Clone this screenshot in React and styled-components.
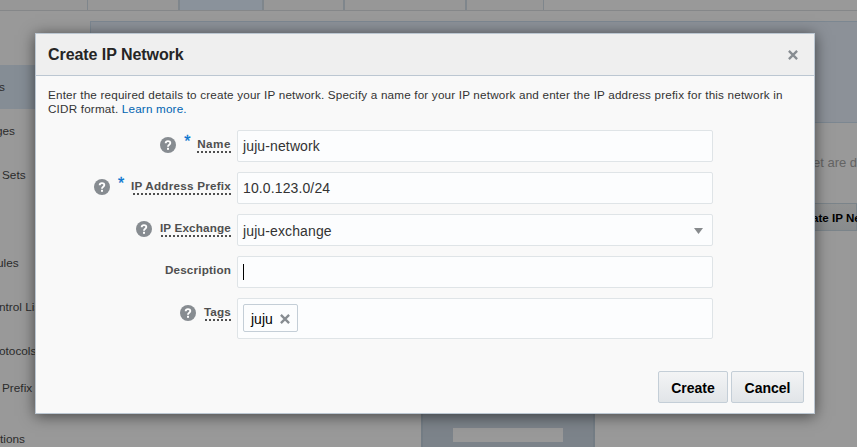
import React from "react";
import styled, { createGlobalStyle } from "styled-components";

const Global = createGlobalStyle`
  * { box-sizing: border-box; }
  html, body { margin: 0; padding: 0; overflow: hidden; background: #999; }
  body { font-family: "Liberation Sans", Arial, sans-serif; color: #333; }
`;

const Page = styled.div`
  position: relative;
  width: 857px;
  height: 447px;
  overflow: hidden;
  background: #999;
`;

const TabBar = styled.nav`
  display: flex;
  height: 11px;
  border-bottom: 1px solid #858789;
`;

const Tab = styled.div`
  width: ${(p) => p.$width}px;
  background: ${(p) => (p.$active ? "#8a929b" : "#979797")};
  border-right: ${(p) => p.$edge}px solid #7f868c;
`;

const Body = styled.div`
  display: flex;
  height: 436px;
`;

const Sidebar = styled.ul`
  flex: none;
  width: 90px;
  margin: 0;
  padding: 54px 0 0;
  list-style: none;
`;

const SideItem = styled.li`
  display: flex;
  align-items: center;
  height: ${(p) => p.$height || 44}px;
  margin-top: ${(p) => p.$gap || 0}px;
  line-height: 14px;
  text-indent: ${(p) => p.$indent}px;
  background: ${(p) => (p.$active ? "#858d95" : "transparent")};
  font-size: 11.8px;
  white-space: nowrap;
  color: #2b2b2b;
`;

const Content = styled.main`
  flex: 1;
  min-width: 0;
  display: flex;
  flex-direction: column;
  padding-top: 10px;
`;

const Banner = styled.div`
  height: 102px;
  border: 1px solid #7c8791;
  border-right: 0;
  background: #8c9198;
`;

const Note = styled.p`
  margin: 32px 0 0 723px;
  font-size: 13px;
  line-height: 16px;
  white-space: nowrap;
  color: #646464;
`;

const PageButton = styled.div`
  height: 28px;
  margin: 32px 0 0 710px;
  padding-left: 11px;
  border: 1px solid #7b848a;
  background: linear-gradient(#929393, #888b8d);
  font-size: 11.6px;
  font-weight: bold;
  line-height: 28px;
  white-space: nowrap;
  color: #000;
`;

const Diagram = styled.div`
  width: 174px;
  flex: 1;
  margin: 150px 0 0 331px;
  padding: 47px 30px 0;
  border: 2px solid #747d85;
  border-width: 0 2px;
  background: #7c838a;
`;

const DiagramLabel = styled.div`
  height: 14px;
  background: #999;
`;

const Dialog = styled.section`
  position: absolute;
  left: 35px;
  top: 33px;
  width: 780px;
  height: 381px;
  display: flex;
  flex-direction: column;
  border: 1px solid #bcc7d2;
  background: #f9f9f9;
  box-shadow: 0 2px 14px rgba(0, 0, 0, 0.55);
`;

const Header = styled.header`
  display: flex;
  align-items: center;
  justify-content: space-between;
  height: 42px;
  padding: 0 16px 0 12px;
  border-bottom: 1px solid #bcc7d2;
  background: #efefef;
`;

const Title = styled.h1`
  margin: 0;
  font-size: 16px;
  line-height: 20px;
  letter-spacing: -0.06px;
  color: #252525;
`;

const Intro = styled.p`
  margin: 12px 0 0 12px;
  font-size: 11.7px;
  line-height: 14px;
  letter-spacing: 0.18px;
  white-space: nowrap;
`;

const Link = styled.a`
  color: #0064b1;
`;

const Form = styled.form`
  display: flex;
  flex-direction: column;
  gap: 10px;
  margin-top: 14px;
`;

const Row = styled.div`
  display: flex;
`;

const LabelCell = styled.div`
  display: flex;
  justify-content: flex-end;
  width: 201px;
  padding: 6px 6px 0 0;
`;

const HelpIcon = styled.svg`
  width: 16px;
  height: 16px;
  margin-top: 1px;
`;

const Star = styled.span`
  margin-left: 8px;
  width: 6px;
  font-size: 16px;
  line-height: 12px;
  color: #0572ce;
  -webkit-text-stroke: 0.3px #0572ce;
`;

const Label = styled.label`
  height: 17px;
  margin-left: ${(p) => p.$gap}px;
  font-size: 11.7px;
  font-weight: bold;
  line-height: 16px;
  letter-spacing: ${(p) => p.$tracking || 0.16}px;
  white-space: nowrap;
  color: #4f4f4f;
  background: ${(p) =>
    p.$dotted
      ? "repeating-linear-gradient(270deg, #4f4f4f 0 2px, transparent 2px 4px) 0 100% / 100% 2px no-repeat"
      : "none"};
`;

const Field = styled.div`
  display: flex;
  align-items: center;
  justify-content: space-between;
  width: 476px;
  height: ${(p) => p.$height || 32}px;
  padding: ${(p) => p.$drop || 0}px 9px 0 5px;
  border: 1px solid #dfe4e7;
  border-radius: 2px;
  background: #fcfdfe;
  font-size: 14px;
  line-height: 16px;
  letter-spacing: 0.12px;
  color: #333;
`;

const Caret = styled.span`
  width: 1px;
  height: 16px;
  background: #000;
`;

const Tag = styled.span`
  display: flex;
  align-items: center;
  gap: 7px;
  width: 55px;
  height: 28px;
  margin-bottom: 1px;
  padding: 2px 0 0 7px;
  border: 1px solid #c4ced7;
  border-radius: 2px;
  letter-spacing: 0;
  color: #000;
`;

const Footer = styled.footer`
  display: flex;
  justify-content: flex-end;
  gap: 3px;
  margin-top: auto;
  padding: 0 10px 10px 0;
`;

const Button = styled.button`
  width: ${(p) => p.$width}px;
  height: 32px;
  padding: 2px 0 0;
  border: 1px solid #c4ced7;
  border-radius: 2px;
  background: linear-gradient(#f3f4f5, #e1e5e8);
  font: bold 14px "Liberation Sans", Arial, sans-serif;
  color: #000;
`;

function Help() {
  return (
    <HelpIcon viewBox="0 0 16 16">
      <circle cx="8" cy="8" r="8" fill="#878c91" />
      <path d="M5.7 6.2C5.7 3.4 10.3 3.4 10.3 6.1C10.3 7.8 8 7.7 8 9.7" fill="none" stroke="#fff" strokeWidth="1.9" />
      <rect x="7" y="10.8" width="2" height="2" fill="#fff" />
    </HelpIcon>
  );
}

function Cross({ size }) {
  return (
    <svg width={size} height={size} viewBox="0 0 10 10">
      <path d="M.9 .9L9.1 9.1M9.1 .9L.9 9.1" stroke="#878c91" strokeWidth="2.3" />
    </svg>
  );
}

function FormRow({ label, help, required, height, drop, tracking, children }) {
  return (
    <Row>
      <LabelCell>
        {help && <Help />}
        {required && <Star>*</Star>}
        <Label $gap={required ? 7 : 8} $dotted={help} $tracking={tracking}>{label}</Label>
      </LabelCell>
      <Field $height={height} $drop={drop}>{children}</Field>
    </Row>
  );
}

export default function App() {
  return (
    <>
      <Global />
      <Page>
        <TabBar>
          <Tab $width={88} $edge={1} />
          <Tab $width={92} $edge={2} />
          <Tab $width={84} $edge={2} $active />
          <Tab $width={81} $edge={2} />
          <Tab $width={122} $edge={2} />
          <Tab $width={77} $edge={1} />
        </TabBar>
        <Body>
          <Sidebar>
            <SideItem $active $indent={-1}>s</SideItem>
            <SideItem $indent={-4}>ges</SideItem>
            <SideItem $indent={2}>Sets</SideItem>
            <SideItem $indent={-3} $gap={44}>ules</SideItem>
            <SideItem $indent={-1}>ntrol Lists</SideItem>
            <SideItem $indent={-1}>otocols</SideItem>
            <SideItem $indent={2} $height={30}>Prefix</SideItem>
            <SideItem $indent={0} $gap={14}>tions</SideItem>
          </Sidebar>
          <Content>
            <Banner />
            <Note>et are d</Note>
            <PageButton>ate IP Network</PageButton>
            <Diagram>
              <DiagramLabel />
            </Diagram>
          </Content>
        </Body>
        <Dialog>
          <Header>
            <Title>Create IP Network</Title>
            <Cross size={10} />
          </Header>
          <Intro>
            Enter the required details to create your IP network. Specify a name for your IP network and enter the IP address prefix for this network in
            <br />
            CIDR format. <Link>Learn more.</Link>
          </Intro>
          <Form>
            <FormRow label="Name" help required tracking={0.5}>juju-network</FormRow>
            <FormRow label="IP Address Prefix" help required tracking={0.23}>10.0.123.0/24</FormRow>
            <FormRow label="IP Exchange" help drop={2}>
              juju-exchange
              <svg width="9" height="6" viewBox="0 0 9 6">
                <path d="M0 0H9L4.5 6Z" fill="#878a8d" />
              </svg>
            </FormRow>
            <FormRow label="Description">
              <Caret />
            </FormRow>
            <FormRow label="Tags" help height={41}>
              <Tag>
                juju
                <Cross size={10} />
              </Tag>
            </FormRow>
          </Form>
          <Footer>
            <Button $width={70}>Create</Button>
            <Button $width={73}>Cancel</Button>
          </Footer>
        </Dialog>
      </Page>
    </>
  );
}
